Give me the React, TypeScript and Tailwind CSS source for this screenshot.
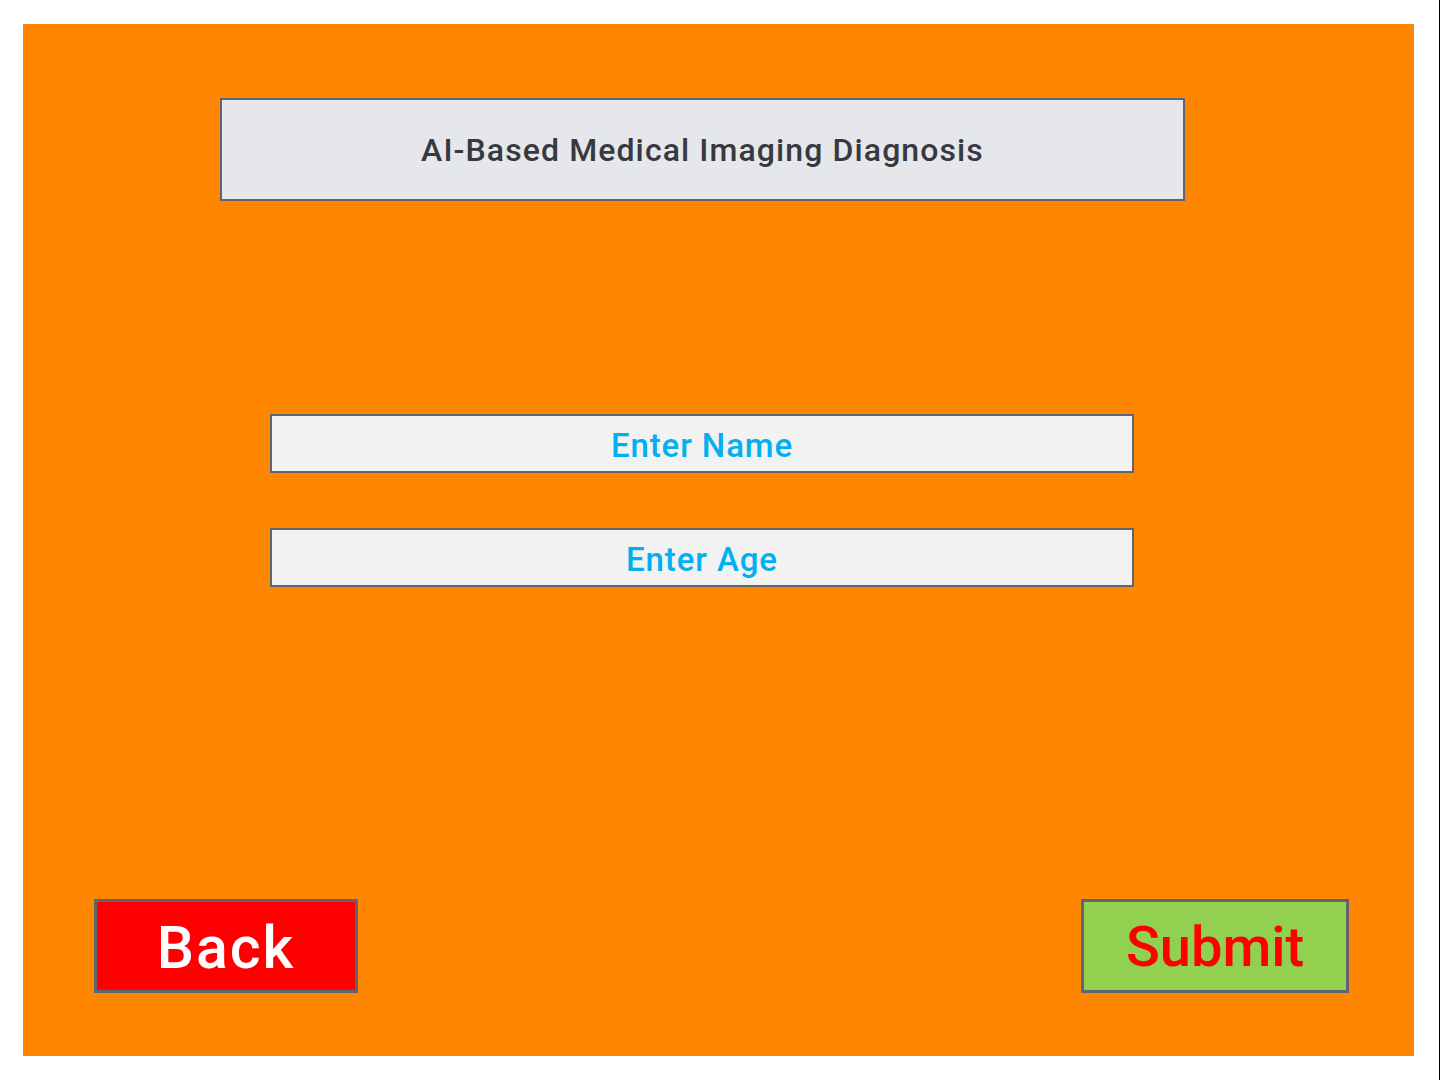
import React from "react";

export default function App() {
  const font = { fontFamily: "Roboto, 'Liberation Sans', sans-serif" };
  return (
    <div className="w-[1440px] h-[1080px] bg-white border-r border-black box-border pl-[23px] pt-[24px]" style={font}>
      <div className="w-[1391px] h-[1032px] bg-[#ff8600] flex flex-col pt-[74px]">
        <div className="ml-[197px] w-[965px] h-[103px] border-2 border-[#5f6570] bg-[#e6e7ea] flex items-center justify-center">
          <span className="text-[32px] font-medium text-[#383840] leading-none tracking-[1.1px]">AI-Based Medical Imaging Diagnosis</span>
        </div>
        <div className="mt-[213px] ml-[247px] w-[864px] h-[59px] border-2 border-[#5f6570] bg-[#f2f2f2] flex items-center justify-center pt-[3px]">
          <span className="text-[33px] font-medium text-[#00b0f0] leading-none tracking-[0.9px]">Enter Name</span>
        </div>
        <div className="mt-[55px] ml-[247px] w-[864px] h-[59px] border-2 border-[#5f6570] bg-[#f2f2f2] flex items-center justify-center pt-[3px]">
          <span className="text-[33px] font-medium text-[#00b0f0] leading-none tracking-[0.9px]">Enter Age</span>
        </div>
        <div className="mt-[312px] ml-[71px] flex">
          <div className="w-[264px] h-[94px] border-[3px] border-[#5f6570] bg-[#ff0000] flex items-center justify-center pt-[2px]">
            <span className="text-[59px] font-medium text-white leading-none tracking-[2px]">Back</span>
          </div>
          <div className="ml-[723px] w-[268px] h-[94px] border-[3px] border-[#5f6570] bg-[#92d050] flex items-center justify-center pt-[2px]">
            <span className="text-[56px] font-medium text-[#ff0000] leading-none">Submit</span>
          </div>
        </div>
      </div>
    </div>
  );
}
